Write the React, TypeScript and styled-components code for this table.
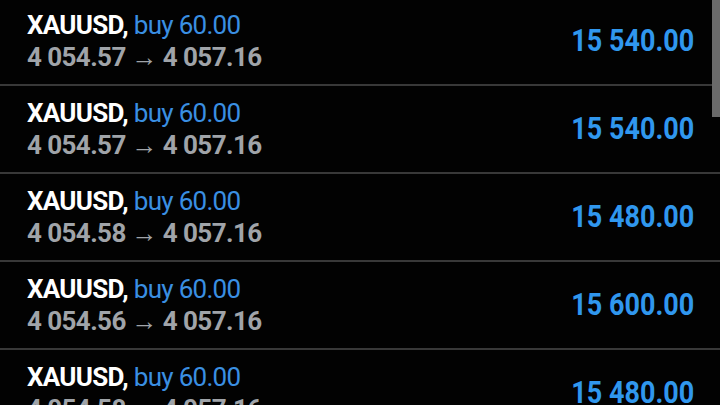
import styled, { createGlobalStyle } from "styled-components";

const GlobalStyle = createGlobalStyle`
  html, body {
    margin: 0;
    padding: 0;
    background: #020202;
    overflow: hidden;
  }
`;

type Deal = {
  symbol: string;
  side: string;
  volume: string;
  open: string;
  close: string;
  profit: string;
};

const deals: Deal[] = [
  { symbol: "XAUUSD", side: "buy", volume: "60.00", open: "4 054.57", close: "4 057.16", profit: "15 540.00" },
  { symbol: "XAUUSD", side: "buy", volume: "60.00", open: "4 054.57", close: "4 057.16", profit: "15 540.00" },
  { symbol: "XAUUSD", side: "buy", volume: "60.00", open: "4 054.58", close: "4 057.16", profit: "15 480.00" },
  { symbol: "XAUUSD", side: "buy", volume: "60.00", open: "4 054.56", close: "4 057.16", profit: "15 600.00" },
  { symbol: "XAUUSD", side: "buy", volume: "60.00", open: "4 054.58", close: "4 057.16", profit: "15 480.00" },
];

const Screen = styled.div`
  position: relative;
  width: 720px;
  height: 405px;
  overflow: hidden;
  background: #020202;
  font-family: Roboto, "Liberation Sans", sans-serif;
`;

// list is scrolled a couple of pixels, the first row is cut at the top
const List = styled.div`
  display: flex;
  flex-direction: column;
  margin-top: -2px;
`;

const Row = styled.div`
  display: flex;
  align-items: center;
  justify-content: space-between;
  height: 86px;
  padding: 0 26px 0 27px;
  border-bottom: 2px solid #383838;
`;

const Info = styled.div`
  display: flex;
  flex-direction: column;
`;

const Title = styled.div`
  font-size: 26px;
  line-height: 32px;
  letter-spacing: -0.7px;
  white-space: nowrap;
`;

const Symbol = styled.span`
  color: #ffffff;
  font-weight: 700;
`;

const Side = styled.span`
  color: #3a8fe2;
`;

const Prices = styled.div`
  color: #a0a4a9;
  font-size: 26px;
  font-weight: 700;
  line-height: 32px;
  letter-spacing: -0.6px;
  white-space: nowrap;
`;

const Profit = styled.div`
  color: #3097ee;
  font-size: 31px;
  font-weight: 700;
  line-height: 36px;
  white-space: nowrap;
  transform: scaleX(0.87);
  transform-origin: right center;
`;

const Scrollbar = styled.div`
  position: absolute;
  top: 0;
  right: 0;
  width: 8px;
  height: 117px;
  background: #6a6a6a;
`;

export default function App() {
  return (
    <Screen>
      <GlobalStyle />
      <List>
        {deals.map((d, i) => (
          <Row key={i}>
            <Info>
              <Title>
                <Symbol>{d.symbol},</Symbol> <Side>{d.side} {d.volume}</Side>
              </Title>
              <Prices>
                {d.open} → {d.close}
              </Prices>
            </Info>
            <Profit>{d.profit}</Profit>
          </Row>
        ))}
      </List>
      <Scrollbar />
    </Screen>
  );
}
